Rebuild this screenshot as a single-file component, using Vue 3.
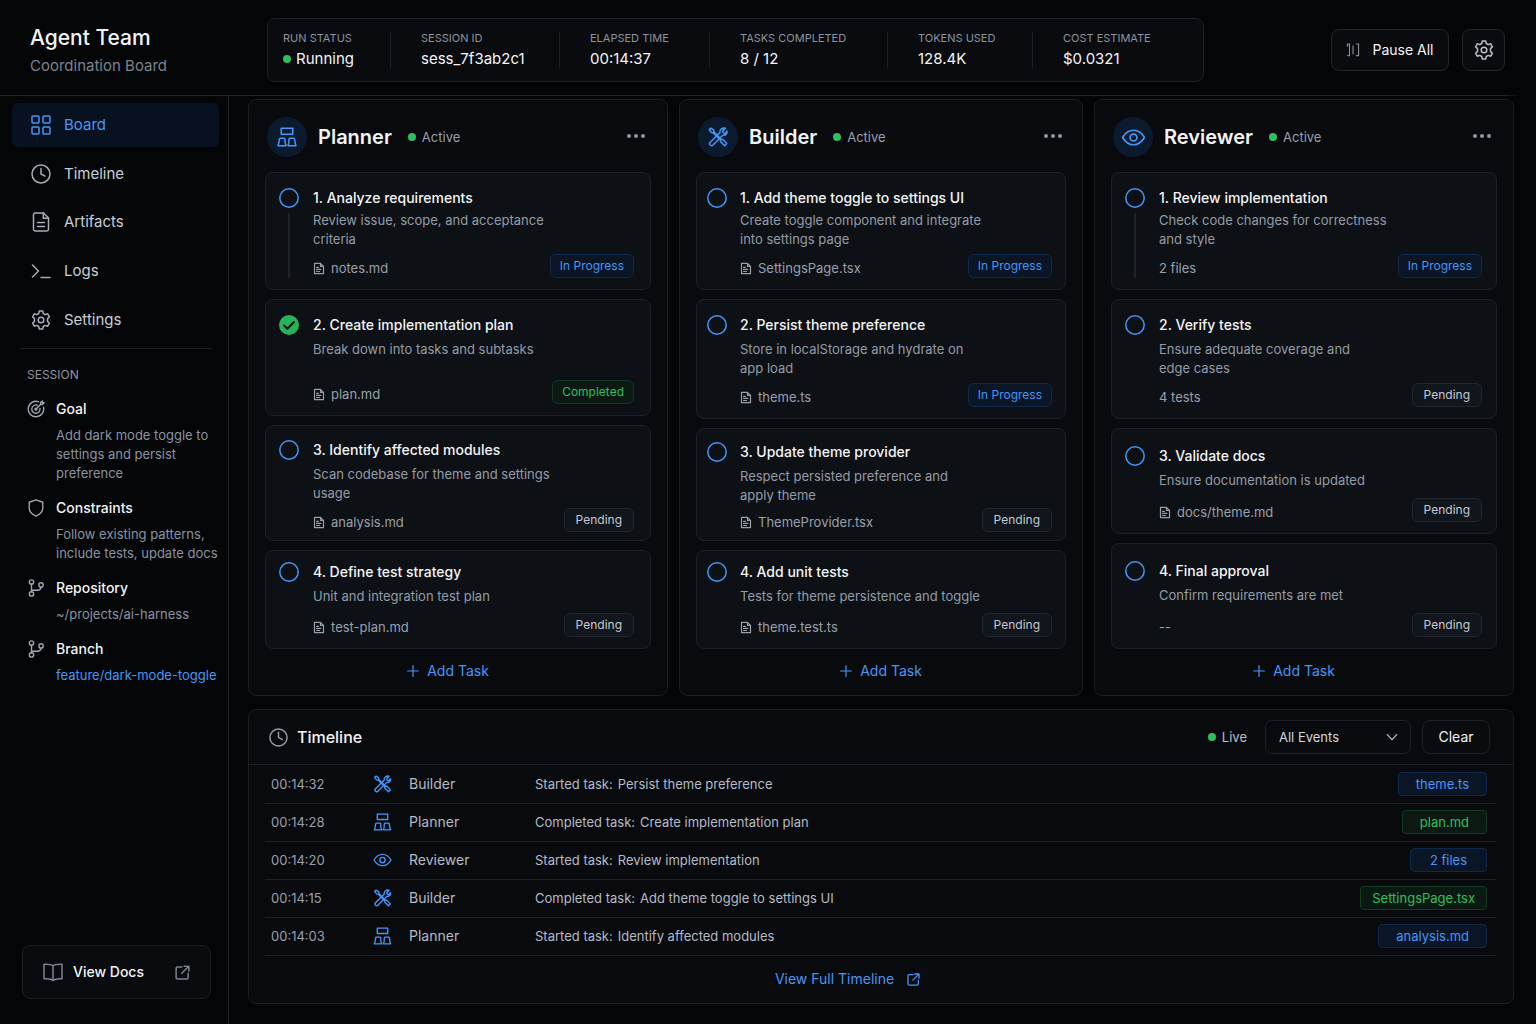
<script setup>
import { ref, h } from 'vue'

const icons = {
  board: '<rect x="1" y="1" width="7" height="7" rx="1"/><rect x="12" y="1" width="7" height="7" rx="1"/><rect x="1" y="12" width="7" height="7" rx="1"/><rect x="12" y="12" width="7" height="7" rx="1"/>',
  clock: '<circle cx="10" cy="10" r="9"/><path d="M10 4.5V10l4 2.2"/>',
  file: '<path d="M12.5 1H4.2a1.700 1.700 0 0 0-1.700 1.700v14.600A1.700 1.700 0 0 0 4.200 19h11.600a1.700 1.700 0 0 0 1.700-1.700V6z"/><path d="M12.300 1v5.200h5.200M6.500 10.500h7M6.500 14.500h7"/>',
  terminal: '<path d="M1.500 4l6 6-6 6M10 16.500h9"/>',
  gear: '<circle cx="10" cy="10" r="2.800"/><path d="M8.300 1h3.400l.6 2.500 1.900 1.100 2.500-.8 1.700 3-1.900 1.800v2.800l1.900 1.800-1.700 3-2.500-.8-1.900 1.100-.6 2.500H8.300l-.6-2.500-1.900-1.100-2.500.8-1.700-3 1.900-1.800V8.600L1.600 6.800l1.700-3 2.500.8 1.900-1.100z"/>',
  target: '<path d="M12.800 1.900A8.600 8.600 0 1 0 18.300 8"/><path d="M11.500 5.800a4.600 4.600 0 1 0 2.900 3.500"/><path d="M9.800 10.300l5.200-5.300V2.800L17 1v2h2l-1.800 2H15"/><circle cx="9.900" cy="10.200" r="1"/>',
  shield: '<path d="M10 1l7.500 2.600v6.600c0 4-3.300 7-7.500 8.800-4.200-1.800-7.500-4.800-7.500-8.800V3.600z"/>',
  branch: '<circle cx="5" cy="3.400" r="2.400"/><circle cx="5" cy="16.600" r="2.400"/><circle cx="15.600" cy="6.600" r="2.400"/><path d="M5 5.800v8.400M5 12.500h6.600a4 4 0 0 0 4-3.500"/>',
  book: '<path d="M10 3.800C8 2 4.500 2 1 2.200v14.600c3.500-.2 7 0 9 1.700 2-1.700 5.500-1.900 9-1.700V2.200C15.500 2 12 2 10 3.800zM10 3.800v14.700"/>',
  external: '<path d="M9 2.500H3.500a2 2 0 0 0-2 2v12a2 2 0 0 0 2 2h12a2 2 0 0 0 2-2V11M12 1.500h6.500V8M18.300 1.700L9 11"/>',
  pause: '<path d="M2 1.500h3v16.500H2.500M10 4v11.500M18 1.500h-3M18 1.500v16.500h-3M2 1.500v3"/>',
  planner: '<rect x="4.200" y="1.200" width="11.600" height="6"/><path d="M3.600 11.200h3.200q1 0 1.200 1l.2 3.800.8 2.800H1l.8-2.800.6-3.800q.2-1 1.200-1zM13.200 11.200h3.200q1 0 1.200 1l.6 3.800.8 2.800h-8l.8-2.800.2-3.800q.2-1 1.200-1z"/>',
  builder: '<path d="M1.200 2.500l1.700-1.300 2.800 2 .2 1.700 7.300 7.300 1.700.3 3.900 4-2.200 2.200-3.900-3.900-.3-1.800-7.300-7.300-1.700-.2z"/><path d="M17.300 1.300l-2.700 2.800.8 1.800 1.800.7 1.700-2.500c.6 2.700-1.500 4.600-4.200 4.100L5 18a1.900 1.900 0 0 1-2.800-2.700L12 5.500c-.7-2.600 2-5 5.300-4.200z"/>',
  reviewer: '<path d="M.5 10C3 5.800 6.200 3.700 10 3.700S17 5.800 19.500 10C17 14.200 13.800 16.300 10 16.300S3 14.200.5 10z"/><circle cx="10" cy="10" r="3"/>',
  doc: '<path d="M12.500 1.500H2.500v17h15v-12zM12.500 1.500v5h5M6 8h3M6 11.500h7M6 15h5"/>',
  plus: '<path d="M10 1v18M1 10h18"/>',
  chevron: '<path d="M2 6l8 8.500L18 6"/>',
  ring: '<circle cx="10" cy="10" r="9.200"/>',
  check: '<path d="M5 10.400l3.400 3.300L15 7"/>'
}

const Icon = (props) =>
  h('svg', {
    viewBox: '0 0 20 20',
    fill: 'none',
    stroke: 'currentColor',
    'stroke-linecap': 'round',
    'stroke-linejoin': 'round',
    'aria-hidden': 'true',
    innerHTML: icons[props.name]
  })
Icon.props = ['name']

const metrics = [
  { label: 'RUN STATUS', value: 'Running', dot: true },
  { label: 'SESSION ID', value: 'sess_7f3ab2c1' },
  { label: 'ELAPSED TIME', value: '00:14:37' },
  { label: 'TASKS COMPLETED', value: '8 / 12' },
  { label: 'TOKENS USED', value: '128.4K' },
  { label: 'COST ESTIMATE', value: '$0.0321' }
]

const nav = [
  { label: 'Board', icon: 'board', active: true },
  { label: 'Timeline', icon: 'clock' },
  { label: 'Artifacts', icon: 'file' },
  { label: 'Logs', icon: 'terminal' },
  { label: 'Settings', icon: 'gear' }
]

const session = [
  { title: 'Goal', icon: 'target', text: 'Add dark mode toggle to\nsettings and persist\npreference' },
  { title: 'Constraints', icon: 'shield', text: 'Follow existing patterns,\ninclude tests, update docs' },
  { title: 'Repository', icon: 'branch', text: '~/projects/ai-harness' },
  { title: 'Branch', icon: 'branch', text: 'feature/dark-mode-toggle', link: true }
]

const labels = { progress: 'In Progress', done: 'Completed', pending: 'Pending' }

const columns = [
  {
    id: 'planner',
    name: 'Planner',
    tasks: [
      { title: '1. Analyze requirements', text: 'Review issue, scope, and acceptance\ncriteria', file: 'notes.md', status: 'progress', size: 'lead', rail: true },
      { title: '2. Create implementation plan', text: 'Break down into tasks and subtasks', file: 'plan.md', status: 'done', size: 'regular' },
      { title: '3. Identify affected modules', text: 'Scan codebase for theme and settings\nusage', file: 'analysis.md', status: 'pending', size: 'snug' },
      { title: '4. Define test strategy', text: 'Unit and integration test plan', file: 'test-plan.md', status: 'pending', size: 'compact' }
    ]
  },
  {
    id: 'builder',
    name: 'Builder',
    tasks: [
      { title: '1. Add theme toggle to settings UI', text: 'Create toggle component and integrate\ninto settings page', file: 'SettingsPage.tsx', status: 'progress', size: 'lead' },
      { title: '2. Persist theme preference', text: 'Store in localStorage and hydrate on\napp load', file: 'theme.ts', status: 'progress', size: 'tall' },
      { title: '3. Update theme provider', text: 'Respect persisted preference and\napply theme', file: 'ThemeProvider.tsx', status: 'pending', size: 'tight' },
      { title: '4. Add unit tests', text: 'Tests for theme persistence and toggle', file: 'theme.test.ts', status: 'pending', size: 'compact' }
    ]
  },
  {
    id: 'reviewer',
    name: 'Reviewer',
    tasks: [
      { title: '1. Review implementation', text: 'Check code changes for correctness\nand style', note: '2 files', status: 'progress', size: 'lead', rail: true },
      { title: '2. Verify tests', text: 'Ensure adequate coverage and\nedge cases', note: '4 tests', status: 'pending', size: 'tall' },
      { title: '3. Validate docs', text: 'Ensure documentation is updated', file: 'docs/theme.md', status: 'pending', size: 'short' },
      { title: '4. Final approval', text: 'Confirm requirements are met', note: '--', status: 'pending', size: 'short' }
    ]
  }
]

const events = [
  { time: '00:14:32', who: 'Builder', icon: 'builder', verb: 'Started task:', task: 'Persist theme preference', chip: 'theme.ts', tone: 'blue' },
  { time: '00:14:28', who: 'Planner', icon: 'planner', verb: 'Completed task:', task: 'Create implementation plan', chip: 'plan.md', tone: 'green' },
  { time: '00:14:20', who: 'Reviewer', icon: 'reviewer', verb: 'Started task:', task: 'Review implementation', chip: '2 files', tone: 'blue' },
  { time: '00:14:15', who: 'Builder', icon: 'builder', verb: 'Completed task:', task: 'Add theme toggle to settings UI', chip: 'SettingsPage.tsx', tone: 'green', long: true },
  { time: '00:14:03', who: 'Planner', icon: 'planner', verb: 'Started task:', task: 'Identify affected modules', chip: 'analysis.md', tone: 'blue' }
]

const filter = ref('All Events')
</script>

<template>
  <div class="app">
    <header class="topbar">
      <div class="brand">
        <h1>Agent Team</h1>
        <p>Coordination Board</p>
      </div>
      <dl class="metrics">
        <div v-for="m in metrics" :key="m.label" class="metric">
          <dt>{{ m.label }}</dt>
          <dd><i v-if="m.dot" class="dot"></i>{{ m.value }}</dd>
        </div>
      </dl>
      <div class="actions">
        <button type="button" class="btn pause"><Icon name="pause" />Pause All</button>
        <button type="button" class="btn square" aria-label="Settings"><Icon name="gear" /></button>
      </div>
    </header>

    <div class="shell">
      <aside class="sidebar">
        <nav class="nav">
          <a v-for="n in nav" :key="n.label" href="#" :class="{ active: n.active }"><Icon :name="n.icon" />{{ n.label }}</a>
        </nav>
        <section class="session">
          <h2>SESSION</h2>
          <div v-for="s in session" :key="s.title" class="fact">
            <Icon :name="s.icon" />
            <h3>{{ s.title }}</h3>
            <a v-if="s.link" href="#">{{ s.text }}</a>
            <p v-else>{{ s.text }}</p>
          </div>
        </section>
        <a href="#" class="docs"><Icon name="book" /><span>View Docs</span><Icon name="external" class="out" /></a>
      </aside>

      <main class="main">
        <div class="board">
          <section v-for="c in columns" :key="c.id" class="panel column" :class="c.id">
            <header class="column-head">
              <span class="avatar"><Icon :name="c.id" /></span>
              <h2>{{ c.name }}</h2>
              <span class="state"><i class="dot"></i>Active</span>
              <button type="button" class="more" :aria-label="c.name + ' options'"><i></i><i></i><i></i></button>
            </header>
            <div class="stack">
              <article v-for="t in c.tasks" :key="t.title" class="card" :class="t.size">
                <div class="mark">
                  <span class="ring" :class="{ filled: t.status === 'done' }"><Icon :name="t.status === 'done' ? 'check' : 'ring'" /></span>
                  <span v-if="t.rail" class="rail"></span>
                </div>
                <div class="content">
                  <h3>{{ t.title }}</h3>
                  <p>{{ t.text }}</p>
                  <footer>
                    <span class="file"><Icon v-if="t.file" name="doc" />{{ t.file || t.note }}</span>
                    <span class="badge" :class="t.status">{{ labels[t.status] }}</span>
                  </footer>
                </div>
              </article>
            </div>
            <button type="button" class="add"><Icon name="plus" />Add Task</button>
          </section>
        </div>

        <section class="panel timeline">
          <header class="timeline-head">
            <Icon name="clock" />
            <h2>Timeline</h2>
            <span class="live"><i class="dot"></i>Live</span>
            <div class="select">
              <select v-model="filter" aria-label="Filter events">
                <option>All Events</option>
              </select>
              <Icon name="chevron" />
            </div>
            <button type="button" class="btn clear">Clear</button>
          </header>
          <div class="rows">
            <table>
              <tbody>
                <tr v-for="e in events" :key="e.time">
                  <td class="time">{{ e.time }}</td>
                  <td class="glyph"><Icon :name="e.icon" /></td>
                  <td class="who">{{ e.who }}</td>
                  <td class="what"><span>{{ e.verb }}</span><span>{{ e.task }}</span></td>
                  <td class="link"><a href="#" class="chip" :class="[e.tone, { long: e.long }]">{{ e.chip }}</a></td>
                </tr>
              </tbody>
            </table>
          </div>
          <a href="#" class="full">View Full Timeline<Icon name="external" /></a>
        </section>
      </main>
    </div>
  </div>
</template>

<style>
body {
  margin: 0;
  background: #040507;
}
</style>

<style scoped>
* {
  box-sizing: border-box;
}
h1, h2, h3, p, dl, dd {
  margin: 0;
}
a {
  color: inherit;
  text-decoration: none;
}
button, select {
  font: inherit;
  color: inherit;
  cursor: pointer;
}
svg {
  flex: none;
  width: 20px;
  height: 20px;
  stroke-width: 1.5;
}
.app {
  display: flex;
  flex-direction: column;
  min-height: 100vh;
  background: #040507;
  color: #f3f4f6;
  font-family: Inter, "Liberation Sans", sans-serif;
  font-size: 14px;
  line-height: 20px;
}
.dot {
  flex: none;
  width: 8px;
  height: 8px;
  border-radius: 50%;
  background: #2fbf5f;
}

/* Top bar */
.topbar {
  display: flex;
  align-items: center;
  min-height: 96px;
  padding: 0 31px 0 30px;
  background: linear-gradient(90deg, #202329 98%, transparent 99%) bottom / 100% 1px no-repeat;
}
.brand {
  width: 237px;
  padding-top: 7px;
}
.brand h1 {
  font-size: 21px;
  line-height: 28px;
  font-weight: 500;
}
.brand p {
  font-size: 15px;
  line-height: 28px;
  color: #7b8491;
}
.metrics {
  flex: 1;
  display: grid;
  grid-template-columns: 122fr 169fr 150fr 178fr 145fr 171fr;
  margin: 4px 127px 0 0;
  padding: 13px 0;
  border: 1px solid #1d2026;
  border-radius: 8px;
  background: #090b0f;
}
.metric {
  padding-left: 30px;
  border-left: 1px solid #1d2026;
  white-space: nowrap;
}
.metric:first-child {
  padding-left: 15px;
  border-left: 0;
}
.metric dt {
  font-size: 11px;
  line-height: 12px;
  padding-bottom: 6px;
  color: #8b93a0;
}
.metric dd {
  display: flex;
  align-items: center;
  gap: 5px;
  font-size: 15px;
  line-height: 18px;
}
.actions {
  display: flex;
  gap: 13px;
  margin-top: 3px;
}
.btn {
  display: flex;
  align-items: center;
  justify-content: center;
  border: 1px solid #22252c;
  border-radius: 8px;
  background: #090b0f;
  padding: 0;
}
.pause {
  gap: 12px;
  width: 118px;
  height: 42px;
}
.pause svg {
  width: 14px;
  height: 14px;
  color: #8a93a1;
}
.square {
  width: 43px;
  height: 42px;
  color: #b9bfc9;
}

/* Sidebar */
.shell {
  flex: 1;
  display: flex;
}
.sidebar {
  display: flex;
  flex-direction: column;
  flex: none;
  width: 229px;
  border-right: 1px solid #202329;
  padding: 7px 9px 25px 12px;
}
.nav {
  display: grid;
  grid-auto-rows: 1fr;
  gap: 5px;
  min-height: 239px;
}
.nav a {
  display: flex;
  align-items: center;
  gap: 13px;
  padding-left: 19px;
  border-radius: 6px;
  font-size: 15px;
  color: #c9ced6;
}
.nav svg {
  color: #a6adb9;
}
.nav .active, .nav .active svg {
  color: #4397f7;
}
.nav .active {
  background: #08111f;
}
.session {
  margin: 6px 7px 0 8px;
  padding: 17px 0 0 7px;
  border-top: 1px solid #1c1e23;
}
.session h2 {
  font-size: 12px;
  line-height: 18px;
  font-weight: 400;
  color: #8d95a2;
}
.fact {
  display: grid;
  grid-template-columns: 18px 1fr;
  column-gap: 11px;
  row-gap: 7px;
  padding-top: 15px;
}
.fact svg {
  width: 18px;
  height: 18px;
  margin-top: 1px;
  color: #a0a8b5;
}
.fact h3 {
  font-size: 14px;
  line-height: 20px;
  font-weight: 500;
}
.fact p, .fact a {
  grid-column: 2;
  font-size: 13px;
  line-height: 19px;
  color: #8a93a1;
  white-space: pre;
}
.fact a {
  color: #4397f7;
}
.docs {
  display: flex;
  align-items: center;
  gap: 10px;
  margin: auto 8px 0 10px;
  height: 54px;
  padding: 0 20px;
  border: 1px solid #1d2026;
  border-radius: 8px;
  background: #090b0f;
  font-size: 14px;
  font-weight: 500;
}
.docs svg {
  color: #7b8491;
}
.docs .out {
  width: 15px;
  height: 15px;
  margin-left: auto;
  stroke-width: 2;
}

/* Board */
.main {
  flex: 1;
  min-width: 0;
  padding: 3px 22px 20px 19px;
}
.panel {
  border: 1px solid #1b1e24;
  border-radius: 8px;
  background: #080a0e;
}
.board {
  display: grid;
  grid-template-columns: 420fr 404fr 420fr;
  gap: 11px;
}
.column {
  display: flex;
  flex-direction: column;
  padding: 17px 16px 14px;
}
.column-head {
  display: flex;
  align-items: center;
  height: 40px;
  margin-bottom: 15px;
  padding: 0 6px 0 2px;
}
.builder .column-head {
  padding-right: 4px;
}
.avatar {
  display: grid;
  place-items: center;
  width: 40px;
  height: 40px;
  border-radius: 50%;
  background: #0c1a2e;
  color: #4397f7;
}
.reviewer .avatar svg {
  width: 23px;
  height: 23px;
}
.column-head h2 {
  margin-left: 11px;
  font-size: 20px;
  line-height: 28px;
  font-weight: 600;
}
.state {
  display: flex;
  align-items: center;
  gap: 6px;
  margin-left: 16px;
  font-size: 13px;
  color: #98a0ac;
}
.more {
  display: flex;
  gap: 3px;
  margin: 0 0 3px auto;
  padding: 8px 0;
  border: 0;
  background: none;
}
.more i {
  width: 4px;
  height: 4px;
  border-radius: 50%;
  background: #8f96a2;
}
.stack {
  display: flex;
  flex-direction: column;
  gap: 9px;
}
.card {
  display: flex;
  gap: 14px;
  min-height: 118px;
  padding: 15px 16px 11px 13px;
  border: 1px solid #1d2026;
  border-radius: 8px;
  background: #0d1014;
}
.builder .card {
  gap: 13px;
  padding-left: 10px;
  padding-right: 13px;
}
.reviewer .card {
  padding-right: 14px;
}
.card.regular {
  min-height: 117px;
}
.card.tall {
  min-height: 120px;
}
.card.snug {
  min-height: 116px;
  padding-top: 14px;
  padding-bottom: 8px;
}
.card.tight {
  min-height: 113px;
  padding-top: 13px;
  padding-bottom: 8px;
}
.card.compact {
  min-height: 99px;
  padding-top: 11px;
}
.card.short {
  min-height: 106px;
  padding-top: 17px;
}
.mark {
  display: flex;
  flex-direction: column;
  align-items: center;
  gap: 5px;
}
.ring {
  display: grid;
  width: 20px;
  height: 20px;
  border-radius: 50%;
  color: #4397f7;
}
.ring.filled {
  background: #27b35a;
  color: #07140c;
}
.ring.filled svg {
  stroke-width: 2;
}
.rail {
  flex: 1;
  width: 2px;
  border-radius: 1px;
  background: #1f242b;
}
.content {
  flex: 1;
  display: flex;
  flex-direction: column;
  min-width: 0;
}
.card h3 {
  font-size: 14px;
  line-height: 20px;
  font-weight: 500;
}
.card p {
  margin-top: 5px;
  font-size: 13px;
  line-height: 19px;
  color: #949ca8;
  white-space: pre-line;
}
.card.lead p {
  margin-top: 3px;
}
.card footer {
  display: flex;
  align-items: flex-end;
  justify-content: space-between;
  margin-top: auto;
}
.file {
  display: flex;
  align-items: center;
  gap: 6px;
  font-size: 13px;
  color: #98a0ac;
}
.file svg {
  width: 12px;
  height: 13px;
  stroke-width: 2;
}
.badge {
  height: 24px;
  padding: 0 9px;
  border: 1px solid #22262f;
  border-radius: 6px;
  background: #11151c;
  font-size: 12px;
  line-height: 22px;
  color: #c3c9d2;
}
.badge.progress {
  border-color: #10294a;
  background: #0a1525;
  color: #4397f7;
}
.badge.done {
  border-color: #123a22;
  background: #0a1a12;
  color: #2fbf5f;
}
.badge.pending {
  padding: 0 11px;
}
.add {
  display: flex;
  align-items: center;
  gap: 8px;
  margin: 12px auto 0;
  padding: 0 20px 0 0;
  border: 0;
  background: none;
  color: #4397f7;
}
.builder .add {
  padding-right: 0;
}
.add svg {
  width: 12px;
  height: 12px;
  stroke-width: 2;
}

/* Timeline */
.timeline {
  margin-top: 13px;
}
.timeline-head {
  display: flex;
  align-items: center;
  height: 55px;
  padding: 0 23px 0 20px;
  border-bottom: 1px solid #1b1e24;
}
.timeline-head > svg {
  color: #98a0ac;
  width: 19px;
  height: 19px;
}
.timeline-head h2 {
  margin-left: 9px;
  font-size: 16px;
  font-weight: 500;
}
.live {
  display: flex;
  align-items: center;
  gap: 6px;
  margin-left: auto;
  font-size: 13px;
  color: #b9c0ca;
}
.select {
  position: relative;
  margin: 0 11px 0 18px;
}
.select select {
  appearance: none;
  width: 146px;
  height: 34px;
  padding: 0 13px;
  border: 1px solid #1f2228;
  border-radius: 7px;
  background: #080a0e;
  font-size: 13px;
  color: #d3d7de;
}
.select svg {
  position: absolute;
  right: 13px;
  top: 11px;
  width: 12px;
  height: 12px;
  stroke-width: 2;
  color: #b9c0ca;
  pointer-events: none;
}
.clear {
  width: 68px;
  height: 34px;
  border-color: #1f2228;
}
.rows {
  padding: 0 17px 0 16px;
}
table {
  width: 100%;
  border-collapse: collapse;
}
tr {
  border-bottom: 1px solid #1b1e24;
}
td {
  height: 38px;
  padding: 0;
  color: #b4bbc6;
}
.time {
  width: 108px;
  padding-left: 6px;
  font-size: 13px;
  color: #98a0ac;
}
.glyph {
  width: 36px;
}
.glyph svg {
  display: block;
  width: 19px;
  height: 18px;
  color: #4397f7;
}
.who {
  width: 126px;
}
.what {
  font-size: 13px;
}
.what span + span {
  margin-left: 5px;
}
.link {
  padding-right: 9px;
  text-align: right;
}
.chip {
  display: inline-block;
  min-width: 77px;
  height: 24px;
  padding: 0 17px;
  border: 1px solid #10294a;
  border-radius: 4px;
  background: #0a1525;
  font-size: 13px;
  line-height: 22px;
  text-align: center;
  color: #4397f7;
  vertical-align: middle;
}
.chip.green {
  border-color: #123a22;
  background: #0a1a12;
  color: #2fbf5f;
}
.chip.long {
  padding: 0 11px;
}
.full {
  display: flex;
  align-items: center;
  justify-content: center;
  gap: 13px;
  height: 47px;
  padding-right: 67px;
  color: #4397f7;
}
.full svg {
  width: 13px;
  height: 13px;
  stroke-width: 2;
}
</style>
